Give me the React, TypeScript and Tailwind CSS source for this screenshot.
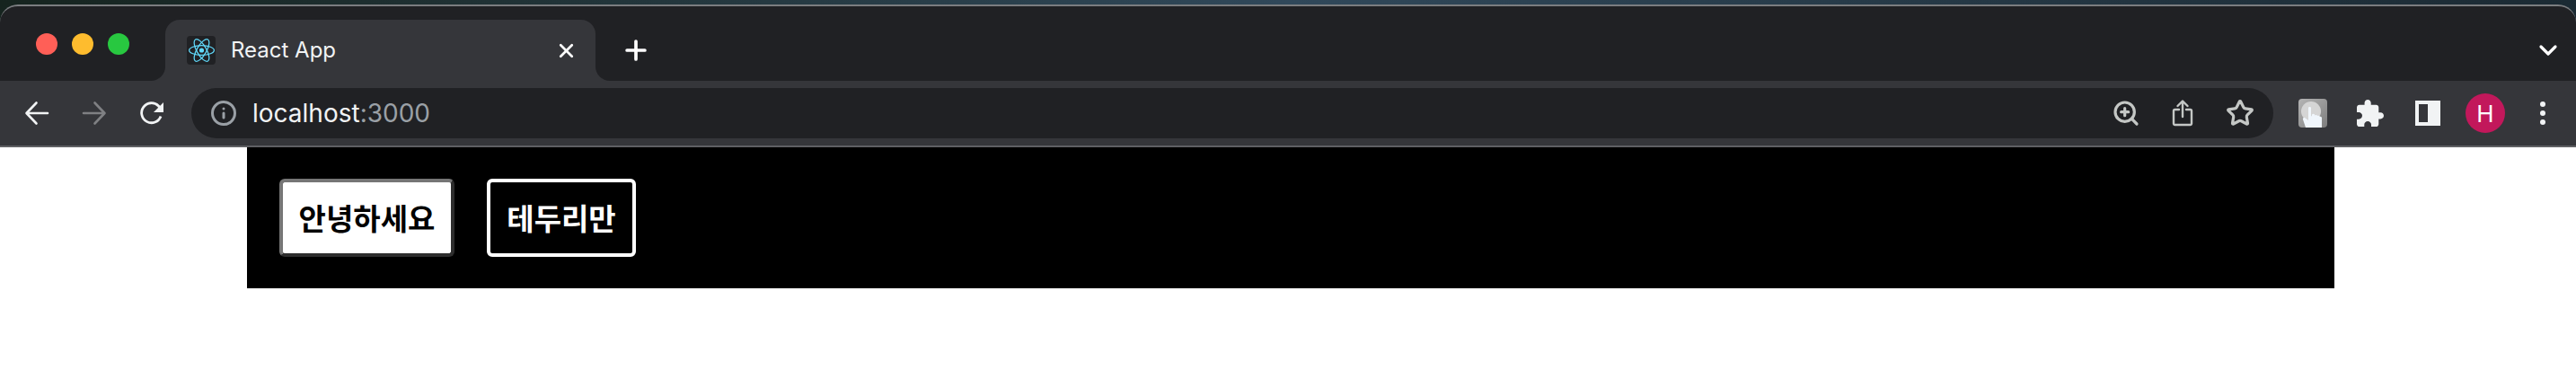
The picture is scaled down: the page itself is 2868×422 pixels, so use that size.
import { Info, Plus, X, ChevronDown, ZoomIn, Star } from 'lucide-react'

const UI_FONT = "font-['Inter','Liberation_Sans',sans-serif]"

function Corner({ side }: { side: 'left' | 'right' }) {
  // the flare that joins the active tab to the toolbar
  return (
    <span className={`absolute bottom-0 h-4 w-4 bg-[#35363a] ${side === 'left' ? '-left-4' : '-right-4'}`}>
      <span className={`block h-4 w-4 bg-[#202124] ${side === 'left' ? 'rounded-br-2xl' : 'rounded-bl-2xl'}`} />
    </span>
  )
}

function ReactLogo() {
  return (
    <span className="mr-[17px] flex h-8 w-8 shrink-0 items-center justify-center rounded bg-[#202124]">
      <svg viewBox="-11.5 -10.2 23 20.4" className="h-[26px] w-[29px]" fill="none" stroke="#61dafb" strokeWidth="1">
        <circle r="2.05" fill="#61dafb" stroke="none" />
        <ellipse rx="11" ry="4.2" />
        <ellipse rx="11" ry="4.2" transform="rotate(60)" />
        <ellipse rx="11" ry="4.2" transform="rotate(120)" />
      </svg>
    </span>
  )
}

function TabStrip() {
  return (
    <div className="flex h-[85px] items-end rounded-t-[20px] border-t-2 border-[#7b7d80] bg-[#202124]">
      <div className="flex h-[68px] w-full items-end">
        <div className="flex h-[55px] w-[184px] shrink-0 items-start gap-4 self-start pl-10 pt-[15px]">
          <span className="h-6 w-6 rounded-full bg-[#ff5f57]" />
          <span className="h-6 w-6 rounded-full bg-[#febc2e]" />
          <span className="h-6 w-6 rounded-full bg-[#28c840]" />
        </div>
        <div className="relative flex h-[68px] w-[479px] shrink-0 items-center rounded-t-2xl bg-[#35363a] pl-6 pr-[20px]">
          <Corner side="left" />
          <Corner side="right" />
          <ReactLogo />
          <span className="flex-1 text-[24px] text-[#f1f3f4]">React App</span>
          <X className="h-[25px] w-[25px] text-white" strokeWidth={2.6} />
        </div>
        <div className="ml-[28px] flex h-[68px] flex-1 items-center justify-between pr-[15px]">
          <Plus className="h-[34px] w-[34px] text-white" strokeWidth={2.6} />
          <ChevronDown className="h-8 w-8 text-white" strokeWidth={2.4} />
        </div>
      </div>
    </div>
  )
}

function NavIcon({ dim, d }: { dim?: boolean; d: string }) {
  return (
    <svg viewBox="0 0 28 28" className="h-7 w-7" fill="none" stroke={dim ? '#7f8083' : '#f1f3f4'} strokeWidth="2.6" strokeLinecap="round" strokeLinejoin="round">
      <path d={d} />
    </svg>
  )
}

function ShareIcon() {
  return (
    <svg viewBox="0 0 24 30" className="h-[30px] w-6" fill="none" stroke="#c4c7c5" strokeWidth="2.4" strokeLinejoin="round" strokeLinecap="round">
      <path d="M8 11H3.5a1.5 1.5 0 0 0-1.5 1.5v14A1.5 1.5 0 0 0 3.5 28h17a1.5 1.5 0 0 0 1.5-1.5v-14a1.5 1.5 0 0 0-1.5-1.5H16" />
      <path d="M12 19V2M6.500 7 12 1.500 17.500 7" />
    </svg>
  )
}

function ExtensionIcon() {
  return (
    <span className="relative h-8 w-8 overflow-hidden rounded bg-gradient-to-br from-[#b5b5b5] to-[#7d7d7d]">
      <span className="absolute left-[3px] top-[3px] h-[22px] w-[22px] rounded-full bg-[#d5d5d5]" />
      <svg viewBox="0 0 32 32" className="absolute inset-0 h-8 w-8" fill="#f0f6fc">
        <path d="M11 10c0-1.500 3-1.500 3 0v9l1 .5v-2c1-1 2.500-1 3 0v1c1-1 2.500-.5 3 .5 1-.5 2.500 0 3 1 1-.5 2 .5 2 1.500V32H8l-3-9c-.5-1.500 1-2.500 2.500-1.500L11 24z" />
      </svg>
    </span>
  )
}

function PuzzleIcon() {
  return (
    <svg viewBox="2 1 21 21" className="ml-[33px] h-[30px] w-[30px]" fill="#f1f3f4">
      <path d="M20.5 11H19V7c0-1.100-.9-2-2-2h-4V3.500C13 2.120 11.880 1 10.500 1S8 2.120 8 3.500V5H4c-1.100 0-1.990.9-1.990 2v3.800H3.500c1.490 0 2.700 1.210 2.700 2.700s-1.210 2.700-2.700 2.700H2V20c0 1.100.9 2 2 2h3.800v-1.500c0-1.490 1.210-2.700 2.700-2.700 1.490 0 2.700 1.210 2.700 2.700V22H17c1.100 0 2-.9 2-2v-4h1.500c1.380 0 2.500-1.120 2.500-2.500S21.880 11 20.500 11z" />
    </svg>
  )
}

function Toolbar() {
  return (
    <div className="flex h-[72px] items-center bg-[#35363a] pl-[27px] pr-[31px]">
      <NavIcon d="M26 14H3M13.500 2.500 2.500 14l11 11.500" />
      <span className="ml-[36px]"><NavIcon dim d="M2 14h23M14.500 2.500 25.500 14l-11 11.500" /></span>
      <span className="ml-[36px]">
        <svg viewBox="0 0 28 28" className="h-7 w-7" fill="none" stroke="#f1f3f4" strokeWidth="2.800">
          <path d="M24 17.500A11 11 0 1 1 21.500 6L24 9" />
          <path d="M27 2v11H16z" fill="#f1f3f4" stroke="none" />
        </svg>
      </span>
      <div className="ml-[30px] flex h-14 w-[2318px] shrink-0 items-center rounded-full bg-[#202124] pl-[21px] pr-[21px]">
        <Info className="h-[30px] w-[30px] text-[#9aa0a6]" strokeWidth={2.4} />
        <span className="ml-[17px] flex-1 text-[28px] text-[#f1f3f4]">
          localhost<span className="text-[#9aa0a6]">:3000</span>
        </span>
        <ZoomIn className="h-8 w-8 text-[#c4c7c5]" strokeWidth={2.4} />
        <span className="ml-[35px] flex"><ShareIcon /></span>
        <Star className="ml-[36px] h-8 w-8 text-[#c4c7c5]" strokeWidth={2.4} />
      </div>
      <span className="ml-7 flex"><ExtensionIcon /></span>
      <PuzzleIcon />
      <span className="ml-[35px] flex h-7 w-7 border-[4px] border-r-[14px] border-[#f1f3f4]" />
      <span className="ml-7 flex h-11 w-11 items-center justify-center rounded-full bg-[#c2185b] text-[26px] text-white">H</span>
      <span className="ml-[39px] flex flex-col gap-1">
        <span className="h-[6px] w-[6px] rounded-full bg-[#f1f3f4]" />
        <span className="h-[6px] w-[6px] rounded-full bg-[#f1f3f4]" />
        <span className="h-[6px] w-[6px] rounded-full bg-[#f1f3f4]" />
      </span>
    </div>
  )
}

export default function App() {
  return (
    <div className={`h-[422px] w-[2868px] overflow-hidden bg-white ${UI_FONT}`}>
      <div className="bg-gradient-to-r from-[#16241f] via-[#30485a] to-[#1b2a33] pt-[5px]">
        <TabStrip />
      </div>
      <Toolbar />
      <div className="h-[2px] bg-[#5f6063]" />
      <div className="mx-[275px] flex h-[157px] w-[2324px] items-center gap-9 bg-black pl-9 font-['Noto_Sans_CJK_KR',sans-serif] text-[33px] font-bold leading-none">
        <button className="h-[87px] w-[195px] rounded-md border-4 border-t-[#767676] border-r-[#2d2d2d] border-b-[#2d2d2d] border-l-[#767676] bg-white text-black">
          안녕하세요
        </button>
        <button className="h-[87px] w-[166px] rounded-md border-4 border-white bg-black text-white">
          테두리만
        </button>
      </div>
    </div>
  )
}
